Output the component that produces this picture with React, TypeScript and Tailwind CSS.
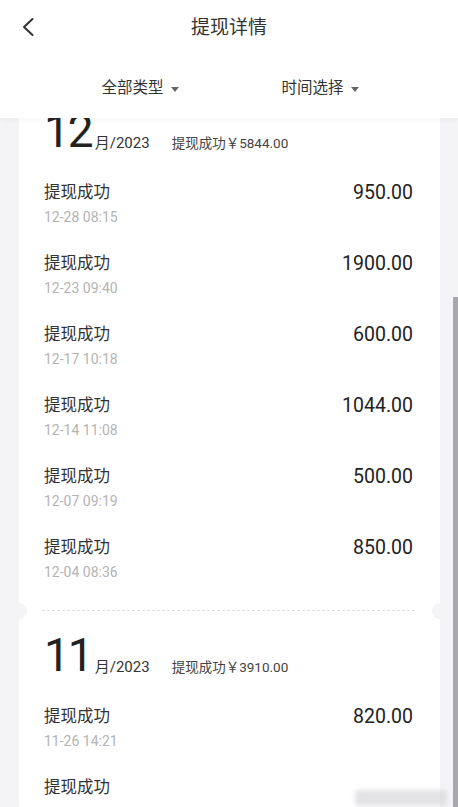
import React from "react";

type Record = { date: string; amount?: string };

const months: { month: string; year: string; total: string; records: Record[] }[] = [
  {
    month: "12",
    year: "2023",
    total: "5844.00",
    records: [
      { date: "12-28 08:15", amount: "950.00" },
      { date: "12-23 09:40", amount: "1900.00" },
      { date: "12-17 10:18", amount: "600.00" },
      { date: "12-14 11:08", amount: "1044.00" },
      { date: "12-07 09:19", amount: "500.00" },
      { date: "12-04 08:36", amount: "850.00" },
    ],
  },
  {
    month: "11",
    year: "2023",
    total: "3910.00",
    records: [{ date: "11-26 14:21", amount: "820.00" }, { date: "" }],
  },
];

const font = { fontFamily: '"Roboto","Noto Sans CJK SC",sans-serif' };

function Caret() {
  return (
    <svg width="8" height="5" viewBox="0 0 8 5" className="ml-[7px] mt-[1px]">
      <path d="M0 0h8L4 5z" fill="#666" />
    </svg>
  );
}

function MonthHeader({ month, year, total }: { month: string; year: string; total: string }) {
  return (
    <div className="flex items-end px-[25px] h-[46px]">
      <span className="text-[46px] leading-[46px] text-[#222] tracking-[-2px]">{month}</span>
      <span className="ml-[3px] mb-[2px] text-[15px] leading-[18px] text-[#333]">月/{year}</span>
      <span className="ml-[22px] mb-[2px] text-[13.5px] leading-[18px] text-[#444]">提现成功￥{total}</span>
    </div>
  );
}

function Row({ r }: { r: Record }) {
  return (
    <div className="flex justify-between pl-[25px] pr-[27px] pt-[13px] pb-[14px]">
      <div>
        <p className="text-[16.5px] leading-[22px] text-[#333]">提现成功</p>
        {r.date && <p className="mt-[4px] text-[14px] leading-[18px] text-[#b4b4b4]">{r.date}</p>}
      </div>
      {r.amount && <p className="text-[19.5px] leading-[22px] text-[#222]">{r.amount}</p>}
    </div>
  );
}

export default function App() {
  return (
    <div className="relative h-[807px] w-[458px] overflow-hidden bg-[#f4f4f6]" style={font}>
      {/* Header */}
      <header className="relative z-10 bg-white shadow-[0_2px_6px_rgba(0,0,0,0.04)]">
        <div className="relative flex h-[56px] items-center justify-center">
          <svg width="14" height="20" viewBox="0 0 14 20" className="absolute left-[21px] top-[17px]">
            <path d="M11.5 2L3 10l8.5 8" fill="none" stroke="#333" strokeWidth="2" strokeLinecap="round" strokeLinejoin="round" />
          </svg>
          <h1 className="text-[19px] text-[#333]">提现详情</h1>
        </div>
        <div className="flex h-[62px] items-center justify-center gap-[103px] pl-[2px] pt-[3px]">
          <button className="flex items-center text-[15.5px] text-[#333]">
            全部类型
            <Caret />
          </button>
          <button className="flex items-center text-[15.5px] text-[#333]">
            时间选择
            <Caret />
          </button>
        </div>
      </header>

      {/* Scrolled list */}
      <div className="-mt-[10px] ml-[19px] mr-[18px] rounded-[8px] bg-white">
        {months.map((m, i) => (
          <div key={m.month}>
            {i > 0 && (
              <div className="relative h-[37px]">
                <div className="absolute left-[23px] right-[25px] top-[15px] border-t border-dashed border-[#dedede]" />
                <div className="absolute -left-[8px] top-[8px] h-[16px] w-[16px] rounded-full bg-[#f4f4f6]" />
                <div className="absolute -right-[8px] top-[8px] h-[16px] w-[16px] rounded-full bg-[#f4f4f6]" />
              </div>
            )}
            <MonthHeader month={m.month} year={m.year} total={m.total} />
            <div className="mt-[15px]">
              {m.records.map((r, j) => (
                <Row key={j} r={r} />
              ))}
            </div>
          </div>
        ))}
      </div>

      {/* Scrollbar */}
      <div className="absolute right-0 top-[297px] h-[510px] w-[5px] bg-[#a8a8ac]" />
      {/* Watermark */}
      <div className="absolute left-[355px] top-[790px] h-[16px] w-[92px] rounded-sm bg-[#d8d8dc] opacity-70 blur-[2px]" />
    </div>
  );
}
